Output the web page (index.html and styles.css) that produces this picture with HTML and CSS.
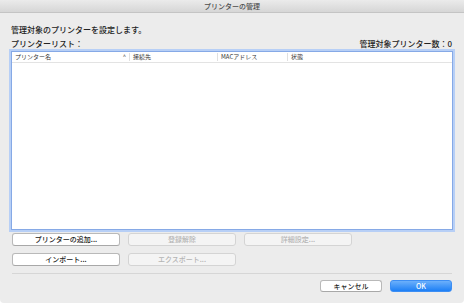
FILE: index.html
```html
<!DOCTYPE html>
<html lang="ja">
<head>
    <meta charset="UTF-8">
    <title>プリンターの管理</title>
    <link rel="stylesheet" href="styles.css">
</head>
<body>
    <div class="window">
        <div class="titlebar">プリンターの管理</div>
        <div class="content">
            <p class="desc">管理対象のプリンターを設定します。</p>
            <div class="label-row">
                <span>プリンターリスト：</span>
                <span>管理対象プリンター数：0</span>
            </div>

            <!-- プリンター一覧 -->
            <div class="list">
                <div class="list-head">
                    <div class="col col-name">プリンター名<span class="sort">^</span></div>
                    <div class="col col-conn">接続先</div>
                    <div class="col col-mac">MACアドレス</div>
                    <div class="col col-state">状態</div>
                </div>
            </div>

            <div class="btn-row first">
                <button class="btn">プリンターの追加...</button>
                <button class="btn" disabled>登録解除</button>
                <button class="btn" disabled>詳細設定...</button>
            </div>
            <div class="btn-row second">
                <button class="btn">インポート...</button>
                <button class="btn" disabled>エクスポート...</button>
            </div>

            <div class="separator"></div>

            <div class="footer">
                <button class="btn btn-small">キャンセル</button>
                <button class="btn btn-small btn-primary">OK</button>
            </div>
        </div>
    </div>
</body>
</html>
```

FILE: styles.css
```css
body {
    margin: 0;
    background: #ffffff;
    font-family: "Noto Sans CJK JP", "Liberation Sans", sans-serif;
}
.window {
    width: 464px;
    height: 303px;
    background: #ececec;
    border-radius: 0 0 4px 4px;
    overflow: hidden;
}
.titlebar {
    height: 12px;
    line-height: 12px;
    text-align: center;
    font-size: 7px;
    font-weight: 500;
    color: #4d4d4d;
    background: linear-gradient(#ebebeb, #d6d6d6);
    border-bottom: 1px solid #c4c4c4;
}
.content {
    padding: 0 11px;
}
.desc {
    margin: 12px 0 0;
    height: 10px;
    line-height: 10px;
    font-size: 8px;
    font-weight: 500;
    color: #222;
}
.label-row {
    margin-top: 4px;
    height: 10px;
    line-height: 10px;
    font-size: 8px;
    font-weight: 500;
    color: #222;
    display: flex;
    justify-content: space-between;
    padding-right: 1px;
}
.list {
    margin-top: 2px;
    height: 177px;
    background: #fff;
    border: 1px solid #86a9e6;
    box-shadow: 0 0 0 2px #b7cff6;
}
.list-head {
    display: flex;
    height: 10px;
    line-height: 10px;
    font-size: 6px;
    color: #333;
    border-bottom: 1px solid #e3e3e3;
}
.col {
    padding-left: 3px;
    border-right: 1px solid #e0e0e0;
    box-sizing: border-box;
    height: 8px;
    line-height: 8px;
    margin-top: 1px;
}
.col-name {
    width: 118px;
    display: flex;
    justify-content: space-between;
    padding-right: 3px;
}
.sort {
    font-size: 6px;
    color: #555;
}
.col-conn {
    width: 88px;
}
.col-mac {
    width: 70px;
}
.col-state {
    border-right: none;
}
.btn-row {
    display: flex;
    gap: 8px;
    padding-left: 1px;
}
.btn-row.first {
    margin-top: 3px;
}
.btn-row.second {
    margin-top: 7px;
}
.btn {
    width: 108px;
    height: 13px;
    padding: 0;
    font-family: inherit;
    font-size: 7px;
    font-weight: 500;
    line-height: 11px;
    color: #222;
    background: #fff;
    border: 1px solid #b9b9b9;
    border-bottom-color: #a8a8a8;
    border-radius: 3px;
}
.btn:disabled {
    color: #b4b4b4;
    background: #f4f4f4;
    border-color: #d4d4d4;
}
.separator {
    margin: 7px 1px 0;
    height: 1px;
    background: #d6d6d6;
}
.footer {
    margin-top: 6px;
    display: flex;
    justify-content: flex-end;
    gap: 8px;
    padding-right: 1px;
}
.btn-small {
    width: 62px;
    height: 12px;
    line-height: 10px;
}
.btn-primary {
    color: #fff;
    background: linear-gradient(#6cb0fb, #1d7ff5);
    border-color: #3d8ef3;
}
```
